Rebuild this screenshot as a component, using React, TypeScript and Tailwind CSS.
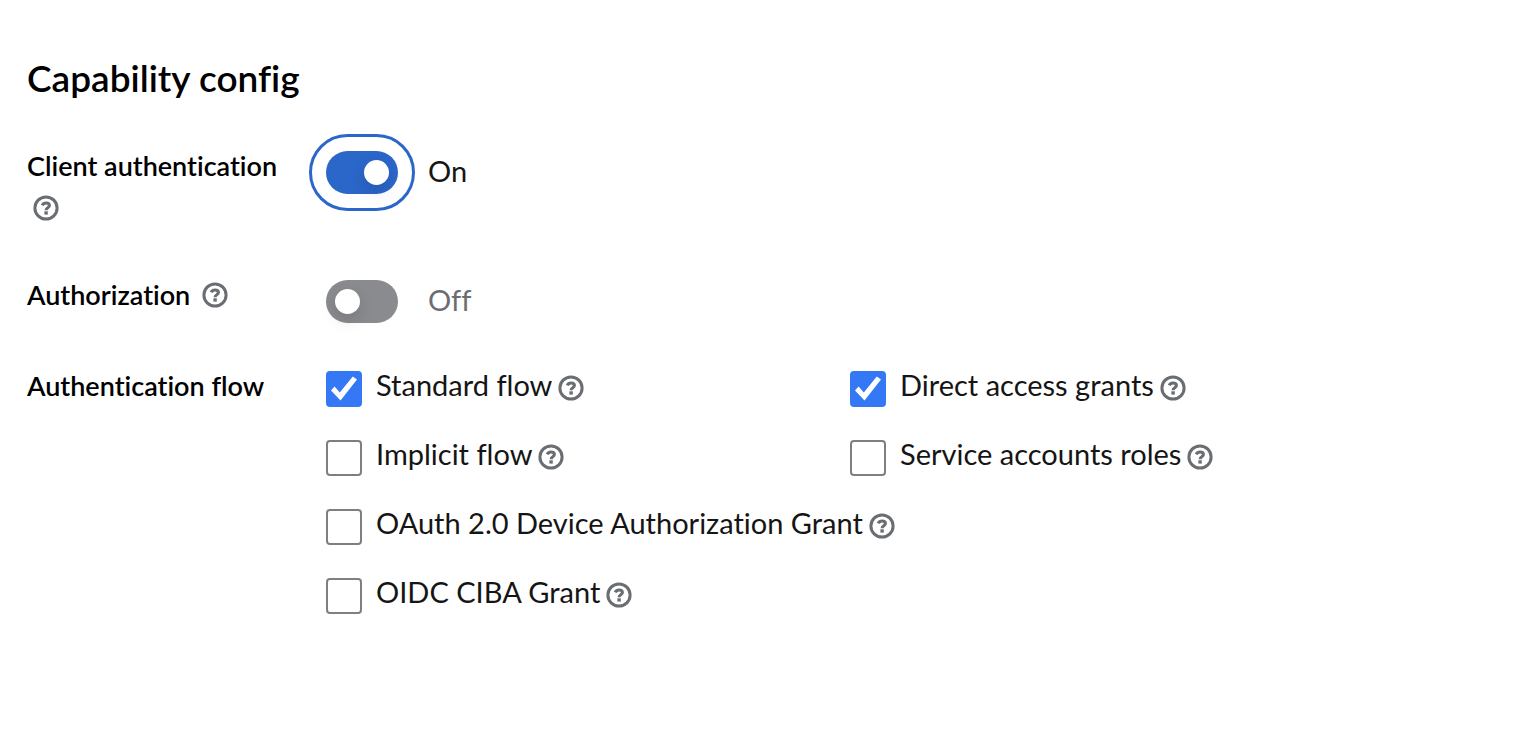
import { useState, type ReactNode } from "react";

function HelpButton({ topic }: { topic: string }) {
  return (
    <button
      type="button"
      aria-label={`More info for ${topic}`}
      className="block cursor-pointer text-[#6a6e73]"
    >
      <svg viewBox="0 0 26 26" className="size-[26px]" fill="none" stroke="currentColor" aria-hidden="true">
        <circle cx="13" cy="13" r="11.1" strokeWidth="3" />
        <path
          d="M9.2 10.4 C10 8.8 11.3 8 13 8 C15 8 16.4 9 16.4 10.6 C16.4 12.9 13.1 12.6 13.1 15.2"
          strokeWidth="3.1"
        />
        <path d="M13.1 16.3 V19.6" strokeWidth="3.4" />
      </svg>
    </button>
  );
}

function FormRow({ label, children }: { label: ReactNode; children: ReactNode }) {
  return (
    <div className="grid grid-cols-[299px_1fr]">
      <div className="pr-4 text-[27px] leading-10 font-semibold text-black">{label}</div>
      <div className="pt-[5px]">{children}</div>
    </div>
  );
}

function Toggle({ id, initial }: { id: string; initial: boolean }) {
  const [on, setOn] = useState(initial);
  return (
    <div className="flex items-start gap-[30px]">
      <input
        id={id}
        type="checkbox"
        role="switch"
        checked={on}
        onChange={(e) => setOn(e.target.checked)}
        className={
          "flex h-[43px] w-[72px] cursor-pointer appearance-none items-center rounded-full px-[9px] before:size-[25px] before:rounded-full before:bg-white before:shadow-[0_6px_16px_rgba(3,3,3,0.14)] " +
          (on
            ? "justify-end bg-[#2b66c9] outline-3 outline-offset-14 outline-[#2b66c9]"
            : "justify-start bg-[#8a8b8f] outline-none")
        }
      />
      <span className={"text-[29px] leading-10 " + (on ? "text-[#151515]" : "text-[#6a6e73]")}>
        {on ? "On" : "Off"}
      </span>
    </div>
  );
}

type Flow = { id: string; label: string; checked: boolean; wide?: boolean };

const flows: Flow[] = [
  { id: "standard", label: "Standard flow", checked: true },
  { id: "direct", label: "Direct access grants", checked: true },
  { id: "implicit", label: "Implicit flow", checked: false },
  { id: "service", label: "Service accounts roles", checked: false },
  { id: "device", label: "OAuth 2.0 Device Authorization Grant", checked: false, wide: true },
  { id: "ciba", label: "OIDC CIBA Grant", checked: false, wide: true },
];

function FlowOption({ flow }: { flow: Flow }) {
  return (
    <div className={"flex items-start " + (flow.wide ? "col-span-2" : "")}>
      <span className="grid size-9 shrink-0">
        <input
          id={flow.id}
          type="checkbox"
          defaultChecked={flow.checked}
          className="peer size-9 cursor-pointer appearance-none rounded border-2 border-[#7f7f7f] bg-white [grid-area:1/1] checked:border-[#3478f6] checked:bg-[#3478f6]"
        />
        <svg
          viewBox="0 0 36 36"
          aria-hidden="true"
          className="pointer-events-none invisible size-9 [grid-area:1/1] peer-checked:visible"
        >
          <path d="M5 19.4 L8.6 15.6 L13.8 21.6 L26.8 5.4 L31 8.6 L14.5 29.6 Z" fill="#fff" />
        </svg>
      </span>
      <label htmlFor={flow.id} className="cursor-pointer pr-[6px] pl-[14px] text-[29px] leading-7 text-[#151515]">
        {flow.label}
      </label>
      <span className="flex h-[34px] items-center">
        <HelpButton topic={flow.label} />
      </span>
    </div>
  );
}

export default function App() {
  return (
    <main className="min-h-screen bg-white px-[27px] pt-14 pb-28 font-['Lato','Noto_Sans',sans-serif] [font-variant-ligatures:none]">
      <h1 className="mb-[46px] text-[37px] leading-[44px] font-semibold text-black">Capability config</h1>
      <form className="flex flex-col">
        <div className="mb-[45px]">
          <FormRow
            label={
              <div className="flex flex-wrap items-center">
                <label htmlFor="client-auth" className="pr-3">
                  Client authentication
                </label>
                <span className="flex h-11 items-center pl-[6px]">
                  <HelpButton topic="Client authentication" />
                </span>
              </div>
            }
          >
            <Toggle id="client-auth" initial={true} />
          </FormRow>
        </div>
        <div className="mb-[43px]">
          <FormRow
            label={
              <div className="flex items-center">
                <label htmlFor="authorization" className="pr-[6px]">
                  Authorization
                </label>
                <span className="pl-[6px]">
                  <HelpButton topic="Authorization" />
                </span>
              </div>
            }
          >
            <Toggle id="authorization" initial={false} />
          </FormRow>
        </div>
        <FormRow label={<span id="flow-label">Authentication flow</span>}>
          <div
            role="group"
            aria-labelledby="flow-label"
            className="grid max-w-[1048px] grid-cols-2 gap-y-[33px]"
          >
            {flows.map((flow) => (
              <FlowOption key={flow.id} flow={flow} />
            ))}
          </div>
        </FormRow>
      </form>
    </main>
  );
}
